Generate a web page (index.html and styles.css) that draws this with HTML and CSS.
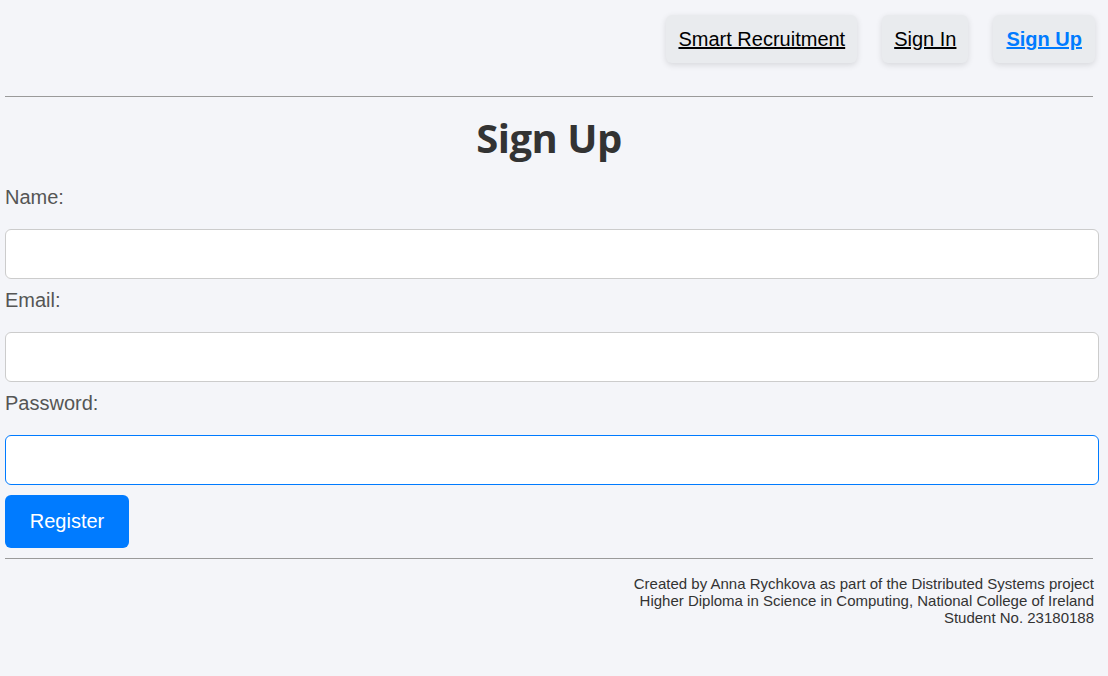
FILE: index.html
```html
<!DOCTYPE html>
<html lang="en">
<head>
<meta charset="utf-8">
<title>Sign Up</title>
<link rel="stylesheet" href="styles.css">
</head>
<body>
<header class="site-header">
  <nav class="nav">
    <a class="nav-link" href="#">Smart Recruitment</a>
    <a class="nav-link" href="#">Sign In</a>
    <a class="nav-link active" href="#">Sign Up</a>
  </nav>
</header>
<hr class="rule rule-top">
<main class="page">
  <h1 class="title">Sign Up</h1>
  <form class="form">
    <label class="label" for="name">Name:</label>
    <input class="field" id="name" type="text">
    <label class="label" for="email">Email:</label>
    <input class="field" id="email" type="email">
    <label class="label" for="password">Password:</label>
    <input class="field focused" id="password" type="password">
    <button class="submit" type="button">Register</button>
  </form>
</main>
<hr class="rule rule-bottom">
<footer class="footer">
  <p>Created by Anna Rychkova as part of the Distributed Systems project</p>
  <p>Higher Diploma in Science in Computing, National College of Ireland</p>
  <p>Student No. 23180188</p>
</footer>
</body>
</html>
```

FILE: styles.css
```css
* { box-sizing: border-box; }
html, body { margin: 0; padding: 0; }
body {
  background: #f4f5f9;
  font-family: "Liberation Sans", Arial, sans-serif;
  color: #333;
  padding: 0 0 0 5px;
}
.site-header {
  padding: 15px 13px 0 0;
}
.nav {
  display: flex;
  justify-content: flex-end;
  gap: 25px;
}
.nav-link {
  display: block;
  height: 48px;
  line-height: 48px;
  padding: 0 12px;
  font-size: 20px;
  color: #000;
  background: #e9ebee;
  border-radius: 6px;
  box-shadow: 0 2px 6px rgba(0, 0, 0, 0.12);
  text-decoration: underline;
}
.nav-link.active {
  padding: 0 13px;
  color: #007bff;
  font-weight: bold;
}
.rule {
  border: 0;
  border-top: 1px solid #9a9a9a;
  margin: 0 15px 0 0;
  height: 0;
}
.rule-top { margin-top: 33px; }
.page { margin: 0; }
.title {
  margin: 17px 15px 0 0;
  text-align: center;
  font-family: "Open Sans", "Noto Sans", sans-serif;
  font-weight: 700;
  font-size: 40px;
  line-height: 48px;
  letter-spacing: -0.5px;
  color: #333;
}
.form {
  display: flex;
  flex-direction: column;
  align-items: flex-start;
  margin-top: 24px;
}
.label {
  font-size: 20px;
  line-height: 23px;
  color: #555;
  margin-bottom: 20px;
}
.field {
  width: 1094px;
  height: 50px;
  border: 1px solid #ccc;
  border-radius: 6px;
  background: #fff;
  margin: 0 0 10px 0;
  padding: 0 10px;
  font-size: 20px;
}
.field.focused {
  border-color: #007bff;
  outline: none;
}
.submit {
  width: 124px;
  height: 53px;
  margin-top: 0;
  border: 0;
  border-radius: 6px;
  background: #007bff;
  color: #fff;
  font-family: "Liberation Sans", Arial, sans-serif;
  font-size: 20px;
}
.rule-bottom { margin-top: 10px; }
.footer {
  text-align: right;
  padding: 16px 14px 0 0;
  font-size: 15px;
  line-height: 17px;
  color: #333;
}
.footer p { margin: 0; }
```
